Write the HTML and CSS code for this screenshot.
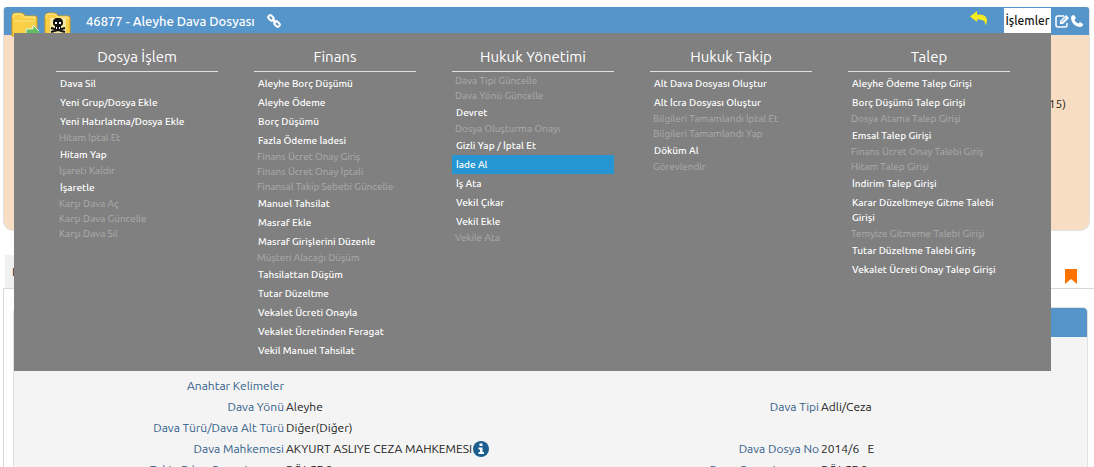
FILE: index.html
```html
<!DOCTYPE html>
<html lang="tr">
<head>
<meta charset="utf-8">
<title>46877 - Aleyhe Dava Dosyası</title>
<link rel="stylesheet" href="styles.css">
</head>
<body>
<section class="file-card">
  <header class="file-bar">
    <div class="folders">
      <svg class="folder" viewBox="0 0 28 28" aria-hidden="true">
        <path d="M1 25V6q0-4 3-4h6q3 0 4 3h10q2 0 2 2v18z" fill="#f9cf45" stroke="#d39a16"/>
        <path d="M2 7V5q0-2 2-2h6q2 0 3 3h11v2" fill="none" stroke="#fff0a0"/>
        <path d="M3 10h21" stroke="#fbe48a"/>
        <path d="M15 18h7v-4l7 7-7 6v-4h-7z" fill="#63bd62" stroke="#e8f4e0"/>
      </svg>
      <svg class="folder" viewBox="0 0 28 28" aria-hidden="true">
        <path d="M1 28V6q0-4 3-4h6q3 0 4 3h10q2 0 2 2v21z" fill="#f9cf45" stroke="#d39a16"/>
        <path d="M2 7V5q0-2 2-2h6q2 0 3 3h11v2" fill="none" stroke="#fff0a0"/>
        <rect x="6" y="7" width="16" height="15" fill="#f7e7a0"/>
        <path d="M7 17l14 4M21 17L7 21" stroke="#111" stroke-width="2"/>
        <path d="M14 7c-4 0-5 2-5 5 0 2 1 2 2 3v3h6v-3c1-1 2-1 2-3 0-3-1-5-5-5z" fill="#111"/>
        <path d="M11 11h2v2h-2zM15 11h2v2h-2zM12 16h1v2h-1zM15 16h1v2h-1z" fill="#fff"/>
      </svg>
    </div>
    <h1 class="file-title">46877 - Aleyhe Dava Dosyası</h1>
    <svg class="icon-link" viewBox="0 0 14 14" fill="none" stroke="#fff" stroke-width="2" aria-hidden="true">
      <rect x="1" y="2" width="6" height="4" rx="2" transform="rotate(45 4 4)"/>
      <rect x="7" y="8" width="6" height="4" rx="2" transform="rotate(45 10 10)"/>
      <path d="M5 5l4 4"/>
    </svg>
    <div class="tools">
      <button class="tool back" aria-label="Geri">
        <svg width="18" height="15" viewBox="0 0 18 15"><path d="M0 5.500L7 0v3.500c6 0 10 1 10 6 0 2-1 4-2 5 1-4-1-6-8-6V11z" fill="#f3ea20"/></svg>
      </button>
      <button class="actions" aria-expanded="true">İşlemler</button>
      <button class="tool" aria-label="Düzenle">
        <svg width="15" height="14" viewBox="0 0 15 14"><path d="M9 2H3Q1 2 1 4v7q0 2 2 2h7q2 0 2-2V9" fill="none" stroke="#fff" stroke-width="1.500"/><path d="M5 7l6-6 3 3-6 6H5z" fill="#fff"/><path d="M6.500 8L11 3.500" stroke="#5695ca"/></svg>
      </button>
      <button class="tool" aria-label="Ara">
        <svg width="12" height="12" viewBox="0 0 12 12"><path d="M3 0l2 3-1.500 1.500C4 6.500 5.500 8 7.500 8.500L9 7l3 2c0 2-1 3-3 3C4 11.500.5 8 0 3 0 1 1 0 3 0z" fill="#fff"/></svg>
      </button>
    </div>
  </header>
  <div class="file-info">15)</div>
</section>

<div class="tabs">
  <span class="tab">Dosya</span>
  <svg class="bookmark" viewBox="0 0 12 15" aria-hidden="true"><path d="M0 0h12v15L6 10l-6 5z" fill="#ff7400"/></svg>
</div>
<main class="panel">
  <section class="detail">
    <div class="detail-head"></div>
    <dl class="fields">
      <dt>Karşı Taraf</dt><dd></dd><dt></dt><dd></dd>
      <dt>Anahtar Kelimeler</dt><dd></dd><dt></dt><dd></dd>
      <dt>Dava Yönü</dt><dd>Aleyhe</dd><dt>Dava Tipi</dt><dd>Adli/Ceza</dd>
      <dt>Dava Türü/Dava Alt Türü</dt><dd>Diğer(Diğer)</dd><dt></dt><dd></dd>
      <dt>Dava Mahkemesi</dt><dd>AKYURT ASLIYE CEZA MAHKEMESI
        <svg class="info" viewBox="0 0 16 16" aria-hidden="true"><circle cx="8" cy="8" r="8" fill="#1c5f8f"/><path d="M6.500 2.500h3v2.500h-3zM5.500 6.500h4v4.500h1.500v2h-5.500v-2H7V8.500H5.500z" fill="#fff"/></svg></dd>
      <dt>Dava Dosya No</dt><dd>2014/6 &nbsp; E</dd>
      <dt>Takip Eden Organizasyon</dt><dd>BÖLGE 2</dd><dt>Dava Organizasyonu</dt><dd>BÖLGE 2</dd>
    </dl>
  </section>
</main>

<nav class="menu" aria-label="İşlemler">
  <section class="menu-col">
    <h2>Dosya İşlem</h2>
    <ul>
      <li><a href="#">Dava Sil</a></li>
      <li><a href="#">Yeni Grup/Dosya Ekle</a></li>
      <li><a href="#">Yeni Hatırlatma/Dosya Ekle</a></li>
      <li class="off">Hitam İptal Et</li>
      <li><a href="#">Hitam Yap</a></li>
      <li class="off">İşareti Kaldır</li>
      <li><a href="#">İşaretle</a></li>
      <li class="off">Karşı Dava Aç</li>
      <li class="off">Karşı Dava Güncelle</li>
      <li class="off">Karşı Dava Sil</li>
    </ul>
  </section>
  <section class="menu-col">
    <h2>Finans</h2>
    <ul>
      <li><a href="#">Aleyhe Borç Düşümü</a></li>
      <li><a href="#">Aleyhe Ödeme</a></li>
      <li><a href="#">Borç Düşümü</a></li>
      <li><a href="#">Fazla Ödeme İadesi</a></li>
      <li class="off">Finans Ücret Onay Giriş</li>
      <li class="off">Finans Ücret Onay İptali</li>
      <li class="off">Finansal Takip Sebebi Güncelle</li>
      <li><a href="#">Manuel Tahsilat</a></li>
      <li><a href="#">Masraf Ekle</a></li>
      <li><a href="#">Masraf Girişlerini Düzenle</a></li>
      <li class="off">Müşteri Alacağı Düşüm</li>
      <li><a href="#">Tahsilattan Düşüm</a></li>
      <li><a href="#">Tutar Düzeltme</a></li>
      <li><a href="#">Vekalet Ücreti Onayla</a></li>
      <li><a href="#">Vekalet Ücretinden Feragat</a></li>
      <li><a href="#">Vekil Manuel Tahsilat</a></li>
    </ul>
  </section>
  <section class="menu-col">
    <h2>Hukuk Yönetimi</h2>
    <ul>
      <li class="off">Dava Tipi Güncelle</li>
      <li class="off">Dava Yönü Güncelle</li>
      <li><a href="#">Devret</a></li>
      <li class="off">Dosya Oluşturma Onayı</li>
      <li><a href="#">Gizli Yap / İptal Et</a></li>
      <li><a href="#" class="current">İade Al</a></li>
      <li><a href="#">İş Ata</a></li>
      <li><a href="#">Vekil Çıkar</a></li>
      <li><a href="#">Vekil Ekle</a></li>
      <li class="off">Vekile Ata</li>
    </ul>
  </section>
  <section class="menu-col">
    <h2>Hukuk Takip</h2>
    <ul>
      <li><a href="#">Alt Dava Dosyası Oluştur</a></li>
      <li><a href="#">Alt İcra Dosyası Oluştur</a></li>
      <li class="off">Bilgileri Tamamlandı İptal Et</li>
      <li class="off">Bilgileri Tamamlandı Yap</li>
      <li><a href="#">Döküm Al</a></li>
      <li class="off">Görevlendir</li>
    </ul>
  </section>
  <section class="menu-col">
    <h2>Talep</h2>
    <ul>
      <li><a href="#">Aleyhe Ödeme Talep Girişi</a></li>
      <li><a href="#">Borç Düşümü Talep Girişi</a></li>
      <li class="off">Dosya Atama Talep Girişi</li>
      <li><a href="#">Emsal Talep Girişi</a></li>
      <li class="off">Finans Ücret Onay Talebi Giriş</li>
      <li class="off">Hitam Talep Girişi</li>
      <li><a href="#">İndirim Talep Girişi</a></li>
      <li><a href="#">Karar Düzeltmeye Gitme Talebi Girişi</a></li>
      <li class="off">Temyize Gitmeme Talebi Girişi</li>
      <li><a href="#">Tutar Düzeltme Talebi Giriş</a></li>
      <li><a href="#">Vekalet Ücreti Onay Talep Girişi</a></li>
    </ul>
  </section>
</nav>
</body>
</html>
```
FILE: styles.css
```css
* { box-sizing: border-box; }
body {
  margin: 0;
  padding: 7px 0 0 3px;
  height: 100vh;
  overflow: hidden;
  background: #fff;
  color: #222;
  font: 12px/21px Ubuntu, "Noto Sans", sans-serif;
}
h1, h2, ul, dl, dd { margin: 0; padding: 0; font-weight: 400; }
button { border: 0; padding: 0; background: none; font: inherit; color: inherit; }

.file-card {
  margin-right: 4px;
  border: 1px solid #e0e0e0;
  border-top: 0;
  border-radius: 3px 3px 10px 10px;
  background: #f7dec2;
}
.file-bar {
  display: flex;
  align-items: center;
  height: 28px;
  padding: 0 6px 0 7px;
  border-radius: 3px 3px 0 0;
  background: #5695ca;
  color: #fff;
}
.folders { display: flex; gap: 5px; height: 24px; width: 60px; margin: 4px 15px 0 0; }
.folder { width: 28px; height: 28px; flex: none; }
.file-title { font-size: 13px; font-weight: 500; }
.icon-link { width: 14px; height: 14px; margin-left: 12px; }
.tools { display: flex; align-items: center; margin-left: auto; gap: 1px; }
.tool { display: flex; }
.back { margin: 0 15px 6px 0; }
.actions {
  height: 26px;
  width: 47px;
  margin-right: 3px;
  background: #fff;
  color: #111;
  font-weight: 500;
  line-height: 26px;
}
.file-info { height: 195px; padding: 58px 23px 0; text-align: right; }

.tabs {
  display: flex;
  justify-content: space-between;
  align-items: center;
  margin-top: 24px;
  padding: 0 17px 0 2px;
}
.tab { padding: 6px 7px; background: #f0f0f0; }
.bookmark { width: 12px; height: 15px; margin-top: 9px; }
.panel { padding: 18px 6px 0 9px; border: solid #d8d8d8; border-width: 1px 0 0 1px; }
.detail { border: 1px solid #e0e0e0; border-radius: 5px 5px 0 0; background: #f4f4f4; }
.detail-head { height: 29px; border-radius: 4px 4px 0 0; background: #5695ca; }
.fields {
  display: grid;
  grid-template-columns: 270px 1fr 265px 1fr;
  grid-auto-rows: 21px;
  column-gap: 2px;
  padding-top: 17px;
}
.fields dt { text-align: right; color: #336089; }
.fields dd { display: flex; align-items: center; white-space: nowrap; }
.info { width: 16px; height: 16px; margin-left: 1px; flex: none; }

.menu {
  position: absolute;
  top: 33px;
  left: 14px;
  right: 43px;
  display: grid;
  grid-template-columns: repeat(5, 1fr);
  gap: 36px;
  padding: 13px 41px 11px 42px;
  background: #808080;
  color: #fff;
}
.menu-col h2 {
  margin-bottom: 2px;
  padding-bottom: 3px;
  border-bottom: 1px solid #e0e0e0;
  font-size: 15px;
  line-height: 22px;
  text-align: center;
}
.menu-col ul { list-style: none; font-size: 10px; line-height: 15px; }
.menu-col a {
  display: block;
  padding: 2px 4px;
  color: #fff;
  font-weight: 500;
  text-decoration: none;
}
.menu-col .off { padding-left: 3px; line-height: 14px; color: #acacac; }
.menu-col .off + .off { line-height: 15px; }
.menu-col .current { background: #2696d2; }
```
